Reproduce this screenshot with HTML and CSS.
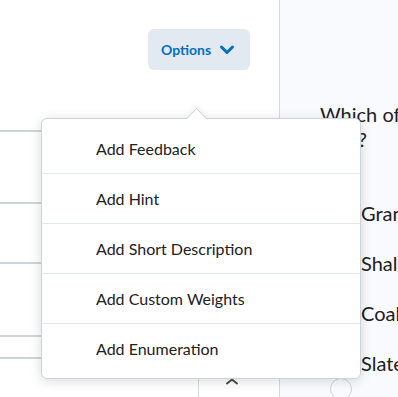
FILE: index.html
```html
<!DOCTYPE html>
<html lang="en">
<head>
    <meta charset="UTF-8">
    <meta name="viewport" content="width=device-width, initial-scale=1.0">
    <title>Question Editor</title>
    <link rel="stylesheet" href="styles.css">
</head>
<body>
    <div class="page">
        <section class="editor">
            <div class="toolbar">
                <button class="options-btn" type="button">
                    Options
                    <svg class="chevron" width="16" height="16" viewBox="0 0 16 16" aria-hidden="true">
                        <path d="M2.5 5 L8 10.5 L13.5 5" fill="none" stroke="currentColor" stroke-width="3" stroke-linecap="round" stroke-linejoin="round"/>
                    </svg>
                </button>
            </div>
            <div class="field field-title"></div>
            <div class="field field-question"></div>
            <div class="field field-points"></div>
            <div class="field field-choices"></div>
            <div class="field field-head"></div>
            <div class="choice-row">
                <div class="cell cell-text"></div>
                <div class="cell cell-actions">
                    <svg width="14" height="14" viewBox="0 0 14 14" aria-hidden="true">
                        <path d="M2 5.5 L7 1.5 L12 5.5" fill="none" stroke="#494c4e" stroke-width="2" stroke-linecap="round" stroke-linejoin="round"/>
                    </svg>
                </div>
            </div>
        </section>

        <section class="preview">
            <p class="question">Which of these is a metamorphic rock?</p>
            <ul class="choices">
                <li><span class="radio"></span>Granite</li>
                <li><span class="radio"></span>Shale</li>
                <li><span class="radio"></span>Coal</li>
                <li><span class="radio radio-low"></span>Slate</li>
            </ul>
        </section>

        <!-- dropdown opened from the Options button -->
        <ul class="menu">
            <li class="menu-item">Add Feedback</li>
            <li class="menu-item">Add Hint</li>
            <li class="menu-item">Add Short Description</li>
            <li class="menu-item">Add Custom Weights</li>
            <li class="menu-item">Add Enumeration</li>
        </ul>
    </div>
</body>
</html>
```

FILE: styles.css
```css
body {
    margin: 0;
    font-family: 'Lato', 'Liberation Sans', sans-serif;
    color: #202122;
    background-color: #fff;
}
.page {
    position: relative;
    display: flex;
    width: 398px;
    height: 397px;
    overflow: hidden;
}
.editor {
    flex: 0 0 280px;
    box-sizing: border-box;
    border-right: 1px solid #d5dbe3;
    background-color: #fff;
}
.toolbar {
    display: flex;
    justify-content: flex-end;
    height: 70px;
    padding-top: 29px;
    padding-right: 29px;
    box-sizing: border-box;
}
.options-btn {
    display: flex;
    align-items: center;
    gap: 8px;
    height: 41px;
    width: 102px;
    padding: 0 0 0 13px;
    border: none;
    border-radius: 6px;
    background-color: #e3e9f1;
    color: #006fbf;
    font-family: 'Lato', sans-serif;
    font-size: 14px;
    font-weight: 700;
    cursor: pointer;
}
.chevron {
    margin-top: 1px;
}
.field {
    box-sizing: border-box;
    border-bottom: 2px solid #cdd5dc;
}
.field-title { height: 62px; }
.field-question { height: 72px; }
.field-points { height: 60px; }
.field-choices { height: 73px; }
.field-head { height: 22px; }
.choice-row {
    display: flex;
    height: 40px;
}
.cell-text {
    width: 198px;
}
.cell-actions {
    flex: 1;
    border-left: 1px solid #d5dbe3;
    padding: 19px 0 0 26px;
}
.cell-actions svg {
    display: block;
}
.preview {
    flex: 0 0 400px;
    background-color: #f9fafd;
    padding-left: 40px;
}
.question {
    width: 290px;
    margin: 102px 0 0;
    font-size: 20px;
    line-height: 25px;
}
.choices {
    list-style: none;
    margin: 49px 0 0;
    padding-left: 10px;
}
.choices li {
    display: flex;
    align-items: flex-start;
    gap: 9px;
    height: 50px;
    font-size: 20px;
    line-height: 24px;
}
.radio {
    flex: 0 0 auto;
    box-sizing: border-box;
    width: 22px;
    height: 22px;
    border: 1px solid #cdd5dc;
    border-radius: 50%;
    background-color: #f9fbff;
}
.radio-low {
    margin-top: 27px;
}
.menu {
    position: absolute;
    left: 41px;
    top: 118px;
    width: 320px;
    box-sizing: border-box;
    margin: 0;
    padding: 5px 0;
    list-style: none;
    background-color: #fff;
    border: 1px solid #cdd5dc;
    border-radius: 6px;
    box-shadow: 0 2px 12px rgba(0, 0, 0, 0.15);
}
.menu::before {
    content: '';
    position: absolute;
    left: 147px;
    top: -8px;
    width: 14px;
    height: 14px;
    background-color: #fff;
    border-top: 1px solid #cdd5dc;
    border-left: 1px solid #cdd5dc;
    transform: rotate(45deg);
    box-shadow: -3px -3px 6px rgba(0, 0, 0, 0.04);
}
.menu-item {
    display: flex;
    align-items: center;
    height: 49px;
    padding-left: 54px;
    font-size: 16px;
}
.menu-item + .menu-item {
    border-top: 1px solid #e3e7ee;
}
```
